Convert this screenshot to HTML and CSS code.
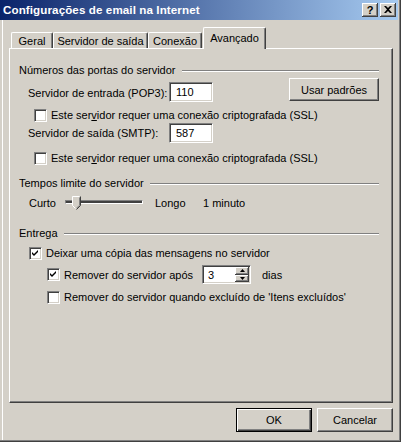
FILE: index.html
```html
<!DOCTYPE html>
<html lang="pt">
<head>
<meta charset="utf-8">
<title>Configurações de email na Internet</title>
<link rel="stylesheet" href="styles.css">
</head>
<body>
<div class="window">
  <div class="titlebar">
    <span class="title">Configurações de email na Internet</span>
    <div class="tbtns">
      <span class="tbtn help">?</span>
      <span class="tbtn close"><svg width="8" height="7" viewBox="0 0 8 7"><path d="M0 0h2l2 2 2-2h2L5 3.5 8 7H6L4 5 2 7H0l3-3.5z" fill="#000"/></svg></span>
    </div>
  </div>
  <div class="content">
    <div class="tabs">
      <div class="tab t-geral">Geral</div>
      <div class="tab t-serv">Servidor de saída</div>
      <div class="tab t-con">Conexão</div>
      <div class="tab sel">Avançado</div>
    </div>
    <div class="panel">
      <div class="head"><span>Números das portas do servidor</span><i class="rule"></i></div>
      <div class="row pop">
        <span class="lbl">Servidor de entrada (POP3):</span>
        <span class="field">110</span>
        <button class="btn defaults">Usar padrões</button>
      </div>
      <div class="chk ssl ssl1"><span class="box"></span><span>Este ser<u>v</u>idor requer uma conexão criptografada (SSL)</span></div>
      <div class="row smtp">
        <span class="lbl">Servidor de saída (SMTP):</span>
        <span class="field">587</span>
      </div>
      <div class="chk ssl ssl2"><span class="box"></span><span>Este ser<u>v</u>idor requer uma conexão criptografada (SSL)</span></div>

      <div class="head h2"><span>Tempos limite do servidor</span><i class="rule"></i></div>
      <div class="slider-row">
        <span class="s-lbl">Curto</span>
        <span class="slider"><span class="track"></span>
          <svg class="thumb" width="9" height="14" viewBox="0 0 9 14">
            <path d="M0.5 9.5V0.5H8.5V9.5L4.5 13.5Z" fill="#d4d0c8"/>
            <path d="M0.5 9.5V0.5H7.5" stroke="#fff" fill="none"/>
            <path d="M0.5 9.5L3.5 12.5" stroke="#fff" fill="none"/>
            <path d="M8.5 0.5V9.5L4.5 13.5" stroke="#404040" fill="none"/>
            <path d="M7.5 1.5V9.2L4.5 12.2" stroke="#808080" fill="none"/>
          </svg>
        </span>
        <span class="s-long">Longo</span>
        <span>1 minuto</span>
      </div>

      <div class="head h3"><span>Entrega</span><i class="rule"></i></div>
      <div class="chk keep"><span class="box"><svg width="7" height="7" viewBox="0 0 7 7"><path d="M0 2L2 4L6 0V2L2 6L0 4Z" fill="#000"/></svg></span><span>Deixar uma cópia das mensagens no servidor</span></div>
      <div class="chk sub after">
        <span class="box"><svg width="7" height="7" viewBox="0 0 7 7"><path d="M0 2L2 4L6 0V2L2 6L0 4Z" fill="#000"/></svg></span>
        <span class="after-lbl">Remover do servidor após</span>
        <span class="spin">
          <span class="spin-val">3</span>
          <span class="spin-btns">
            <span class="sb"><svg width="5" height="3" viewBox="0 0 5 3"><path d="M2.5 0L5 3H0Z" fill="#000"/></svg></span>
            <span class="sb"><svg width="5" height="3" viewBox="0 0 5 3"><path d="M0 0H5L2.5 3Z" fill="#000"/></svg></span>
          </span>
        </span>
        <span class="days">dias</span>
      </div>
      <div class="chk sub when"><span class="box"></span><span>Remover do servidor quando excluído de 'Itens excluídos'</span></div>
    </div>
    <div class="actions">
      <button class="btn ok">OK</button>
      <button class="btn cancel">Cancelar</button>
    </div>
  </div>
</div>
</body>
</html>
```
FILE: styles.css
```css
* { box-sizing: border-box; margin: 0; padding: 0; }
html, body { width: 401px; height: 442px; overflow: hidden; background: #d4d0c8; }
body { font-family: "Liberation Sans", Arial, sans-serif; font-size: 11px; line-height: 14px; color: #000; }

.window {
  width: 401px; height: 442px;
  padding: 0 3px 2px 0;
  display: flex; flex-direction: column;
  background: #d4d0c8;
  box-shadow: inset -1px -1px #404040, inset -2px -2px #808080, inset 2px 0 #d4d0c8, inset 3px 0 #fff;
}

.titlebar {
  height: 20px; flex: none;
  display: flex; align-items: center;
  padding: 0 2px 0 3px;
  background: linear-gradient(to right, #0a246a, #a6caf0);
}
.title { flex: 1; color: #fff; font-weight: bold; font-size: 11.6px; letter-spacing: 0.1px; }
.tbtns { display: flex; gap: 2px; }
.tbtn {
  width: 16px; height: 14px;
  background: #d4d0c8;
  box-shadow: inset -1px -1px #404040, inset 1px 1px #fff, inset -2px -2px #808080;
  display: flex; align-items: center; justify-content: center;
}
.help { font-weight: bold; font-size: 11px; line-height: 12px; padding-bottom: 1px; }
.close svg { display: block; margin-top: -1px; }

.content { flex: 1; display: flex; flex-direction: column; padding: 7px 5px 0 9px; }

.tabs { display: flex; align-items: flex-end; height: 21px; padding-left: 2px; position: relative; z-index: 1; }
.tab {
  height: 16px;
  background: #d4d0c8;
  border-top: 1px solid #fff; border-left: 1px solid #fff; border-right: 1px solid #404040;
  box-shadow: inset -1px 0 #808080;
  border-top-left-radius: 2px; border-top-right-radius: 2px;
  text-align: center; padding-top: 1px;
}
.t-geral { width: 42px; }
.t-serv { width: 95px; }
.t-con { width: 54px; }
.tab.sel { width: 63px; height: 22px; margin-left: 1px; margin-bottom: -1px; padding-top: 3px; }

.panel {
  height: 355px; flex: none;
  border: 1px solid; border-color: #fff #404040 #404040 #fff;
  box-shadow: inset -1px -1px #808080;
  padding: 14px 13px 0 9px;
  display: flex; flex-direction: column;
}

.head { display: flex; align-items: center; height: 14px; }
.rule { flex: 1; height: 2px; border-top: 1px solid #808080; border-bottom: 1px solid #fff; margin: 2px 0 0 6px; }
.h2 { margin-top: 11px; }
.h3 { margin-top: 13px; }

.row { display: flex; }
.lbl { width: 141px; margin-left: 9px; }
.pop { height: 24px; margin-top: 1px; align-items: flex-start; }
.pop .lbl { margin-top: 8px; }
.pop .field { margin-top: 4px; }
.smtp { height: 20px; margin-top: 1px; align-items: center; }

.field {
  width: 44px; height: 20px;
  background: #fff;
  border: 1px solid; border-color: #808080 #fff #fff #808080;
  box-shadow: inset 1px 1px #404040, inset -1px -1px #d4d0c8;
  padding: 2px 0 0 6px;
}

.btn {
  font: inherit; color: #000;
  background: #d4d0c8;
  border: 1px solid; border-color: #fff #404040 #404040 #fff;
  box-shadow: inset -1px -1px #808080;
}
.defaults { width: 90px; height: 23px; margin-left: auto; }

.chk { display: flex; align-items: center; height: 14px; }
.box {
  width: 13px; height: 13px; flex: none;
  background: #fff;
  border: 1px solid; border-color: #808080 #fff #fff #808080;
  box-shadow: inset 1px 1px #404040, inset -1px -1px #d4d0c8;
  margin-right: 4px;
  display: flex; align-items: center; justify-content: center;
}
.box svg { display: block; }
.ssl { margin-left: 15px; }
.ssl1 { margin-top: 6px; }
.ssl2 { margin-top: 8px; }

.slider-row { display: flex; align-items: center; height: 20px; margin-top: 3px; }
.s-lbl { width: 36px; margin-left: 10px; }
.slider { position: relative; width: 78px; height: 20px; display: flex; align-items: flex-start; }
.track {
  width: 100%; height: 4px; margin-top: 7px;
  border: 1px solid; border-color: #808080 #fff #fff #808080;
  background: #404040;
}
.thumb { position: absolute; left: 7px; top: 3px; display: block; }
.s-long { width: 48px; margin-left: 12px; }

.keep { margin-left: 10px; margin-top: 6px; }
.sub { margin-left: 28px; }
.after { height: 19px; margin-top: 5px; }
.after-lbl { width: 138px; }
.when { margin-top: 6px; }

.spin {
  width: 49px; height: 19px;
  display: flex;
  background: #fff;
  border: 1px solid; border-color: #808080 #fff #fff #808080;
  box-shadow: inset 1px 1px #404040, inset -1px -1px #d4d0c8;
  padding: 1px;
}
.spin-val { flex: 1; padding: 1px 0 0 4px; }
.spin-btns { width: 14px; display: flex; flex-direction: column; }
.sb {
  flex: 1;
  background: #d4d0c8;
  box-shadow: inset -1px -1px #404040, inset 1px 1px #fff, inset -2px -2px #808080;
  display: flex; align-items: center; justify-content: center;
}
.sb svg { display: block; }
.days { margin-left: 11px; }

.actions { display: flex; justify-content: flex-end; gap: 5px; margin-top: 5px; }
.actions .btn { width: 76px; height: 24px; }
.ok {
  border: 1px solid #000;
  box-shadow: inset 1px 1px #fff, inset -1px -1px #404040, inset -2px -2px #808080;
}
```
